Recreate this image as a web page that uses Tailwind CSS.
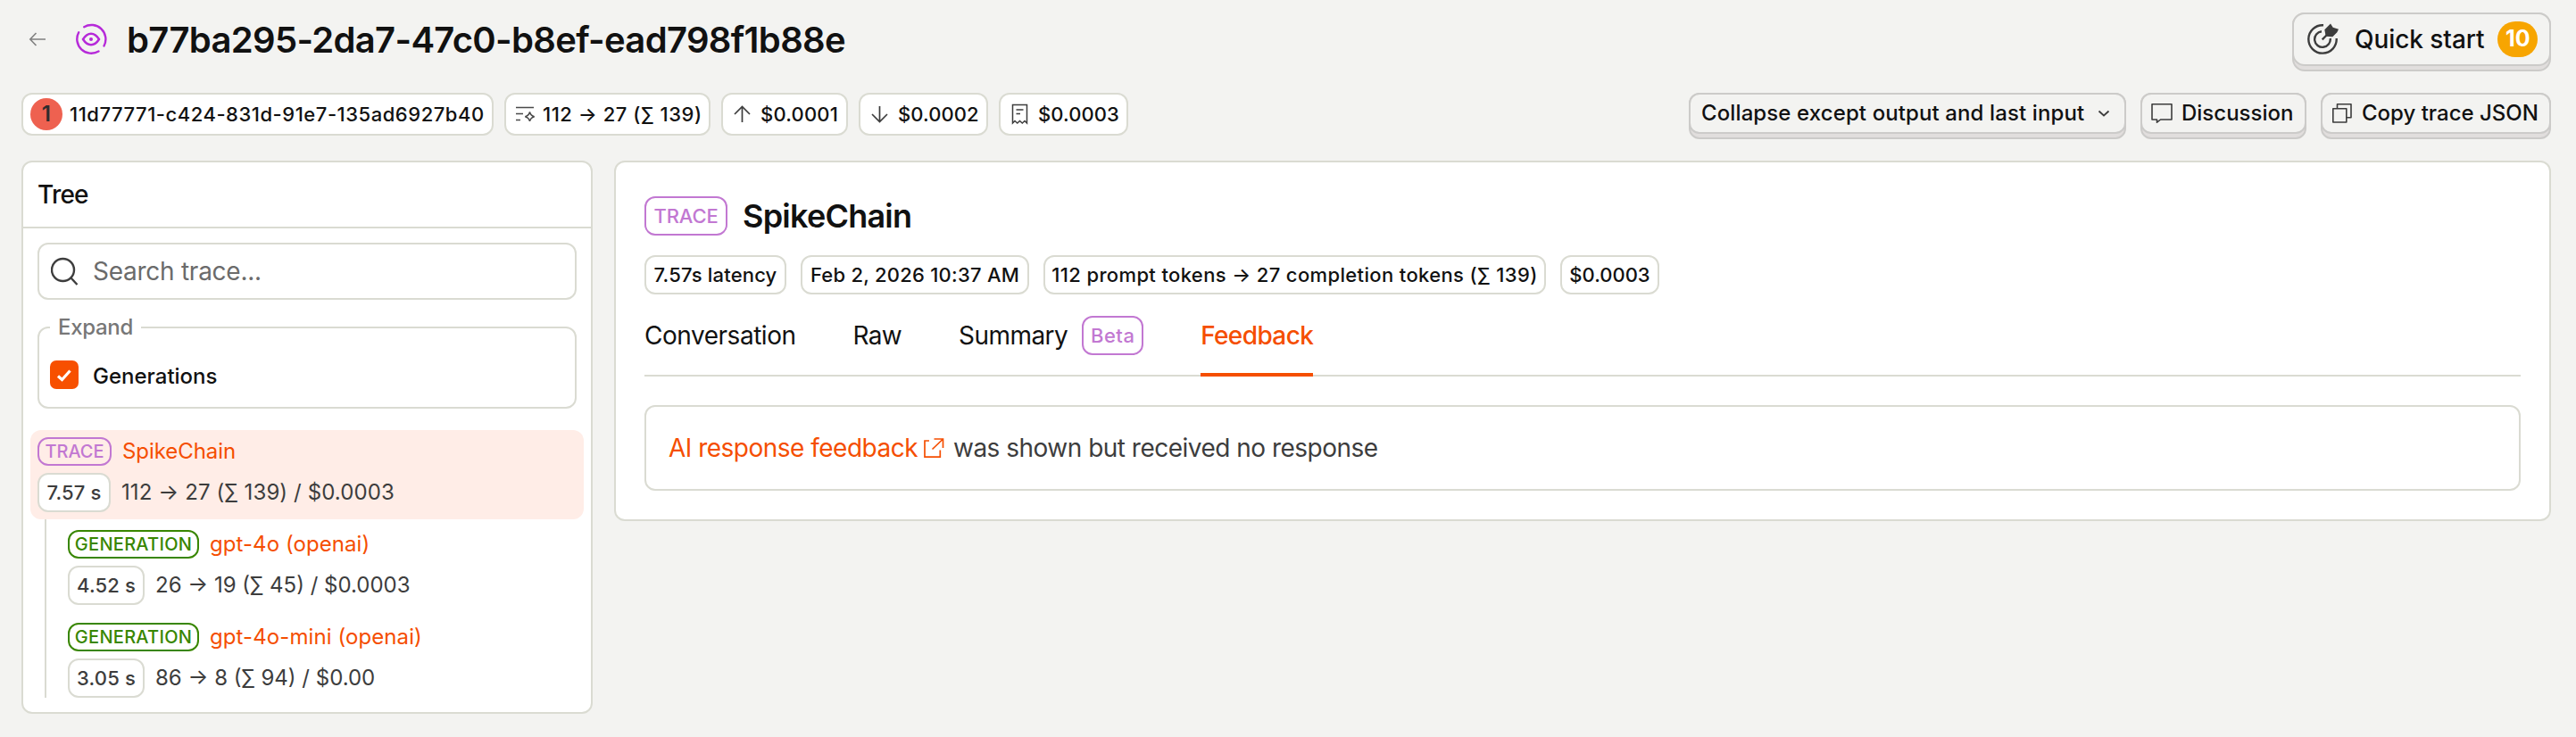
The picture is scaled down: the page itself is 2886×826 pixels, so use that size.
<!DOCTYPE html>
<html lang="en">
<head>
<meta charset="utf-8">
<title>Trace</title>
<script src="https://cdn.jsdelivr.net/npm/@tailwindcss/browser@4"></script>
</head>
<body class="bg-[#f3f3f1] font-['Inter',sans-serif] text-[#111] w-[2886px] h-[826px] overflow-hidden">
<div class="flex flex-col pl-6 pr-7 pt-3.5">
  <header class="flex items-start justify-between h-[90px]">
    <div class="flex items-center h-[60px] pl-2">
      <svg class="w-5 h-5" viewBox="0 0 20 20" fill="none" stroke="#808080" stroke-width="1.6"><path d="M19 10H2M8.5 3 1.8 10l6.700 7"/></svg>
      <svg class="w-9 h-9 ml-8" viewBox="0 0 36 36" fill="none" stroke="#b62ad9" stroke-width="2.400" stroke-linecap="round"><path d="M10.200 4.200A16 16 0 0 1 32.500 25.500M26.500 31.500A16 16 0 0 1 4.200 10.200"/><path d="M9 18c2.500-4 5.500-6.200 9-6.200s6.500 2.200 9 6.200c-2.500 4-5.500 6.200-9 6.200S11.500 22 9 18z"/><circle cx="18" cy="18" r="2" fill="#b62ad9" stroke="none"/></svg>
      <h1 class="ml-[22px] pt-px text-[40px] leading-[60px] font-semibold tracking-[-0.68px] whitespace-nowrap">b77ba295-2da7-47c0-b8ef-ead798f1b88e</h1>
    </div>
    <button class="flex flex-col h-[66px] w-[290px] rounded-[14px] border-2 border-[#cccbc9] bg-[#e1dedd]">
      <span class="-mt-[2px] -mx-0.5 flex h-[60px] items-center rounded-[14px] border-2 border-[#cccbc9] bg-[#f3f3f1] pl-[15px]">
        <svg class="w-9 h-9" viewBox="0 0 36 36" fill="none" stroke="#3d3d3d" stroke-width="2.400"><path d="M18 2.300A15.700 15.700 0 1 0 32.700 17M16 9.300a8.800 8.800 0 1 0 9.700 7.700M16.700 18.300 22 13"/><path d="M19.300 7.300 26 .5l2.700 4.200L35 6.700l-1.700 3.500-5 5.100-7.600-.6z" fill="#3d3d3d" stroke="none"/></svg>
        <span class="ml-[17px] text-[28px] font-medium tracking-[-0.07px] whitespace-nowrap">Quick start</span>
        <span class="ml-[15px] flex h-10 w-[45px] items-center justify-center rounded-[20px] bg-[#f7a501] text-[25px] font-bold text-white">10</span>
      </span>
    </button>
  </header>
  <div class="flex items-start justify-between h-[76px]">
    <div class="flex gap-3 text-[22px] font-medium whitespace-nowrap">
      <span class="flex h-12 w-[529px] items-center rounded-xl border-2 border-[#dadbd2] bg-white pl-2 tracking-[0.53px]"><i class="mr-2 flex h-9 w-9 items-center justify-center rounded-full bg-[#ee6150] text-2xl font-semibold not-italic text-[#2d2d2d]">1</i>11d77771-c424-831d-91e7-135ad6927b40</span>
      <span class="flex h-12 w-[231px] items-center rounded-xl border-2 border-[#dadbd2] bg-white pl-2.5 tracking-[0.53px]"><svg class="mr-[7px] w-6 h-6" viewBox="0 0 24 24" fill="none" stroke="#4a4a4a" stroke-width="1.500"><path d="M1 4.500h20M1 11.500h8M1 18.500h5M16.500 9.500q1 4.200 5.200 5.200-4.200 1-5.200 5.200-1-4.200-5.200-5.200 4.200-1 5.200-5.200z"/></svg>112 → 27 (∑ 139)</span>
      <span class="flex h-12 w-[142px] items-center rounded-xl border-2 border-[#dadbd2] bg-white pl-2.5 tracking-[0.2px]"><svg class="mr-2 w-6 h-6" viewBox="0 0 24 24" fill="none" stroke="#3d3d3d" stroke-width="1.700"><path d="M11.500 21V4M3 12l8.500-8.500L20 12"/></svg>$0.0001</span>
      <span class="flex h-12 w-[145px] items-center rounded-xl border-2 border-[#dadbd2] bg-white pl-2.5 tracking-[0.08px]"><svg class="mr-2 w-6 h-6" viewBox="0 0 24 24" fill="none" stroke="#3d3d3d" stroke-width="1.700"><path d="M11.500 3v17M3 12l8.500 8.500L20 12"/></svg>$0.0002</span>
      <span class="flex h-12 w-[145px] items-center rounded-xl border-2 border-[#dadbd2] bg-white pl-2.5 tracking-[0.08px]"><svg class="mr-2 w-6 h-6" viewBox="0 0 24 24" fill="none" stroke="#3d3d3d" stroke-width="1.500"><path d="M3.500 22V1.500h16V22l-2.500-2.500-2.700 2.500-2.800-2.500L8.800 22 6 19.500zM7.500 7h8M7.500 11.500H12"/></svg>$0.0003</span>
    </div>
    <div class="flex gap-4 text-2xl font-medium whitespace-nowrap">
      <button class="flex flex-col h-[52px] w-[490px] rounded-xl border-2 border-[#cccbc9] bg-[#e1dedd]"><span class="-mt-[2px] -mx-0.5 flex h-[46px] items-center rounded-xl border-2 border-[#cccbc9] bg-[#f3f3f1] pl-3 tracking-[0.11px]">Collapse except output and last input<svg class="ml-[15px] w-3.5 h-3.5" viewBox="0 0 14 14" fill="none" stroke="#3d3d3d" stroke-width="1.800"><path d="m1.500 4.500 5.500 5 5.500-5"/></svg></span></button>
      <button class="flex flex-col h-[52px] w-[186px] rounded-xl border-2 border-[#cccbc9] bg-[#e1dedd]"><span class="-mt-[2px] -mx-0.5 flex h-[46px] items-center rounded-xl border-2 border-[#cccbc9] bg-[#f3f3f1] pl-2.5"><svg class="mr-2.5 w-6 h-6" viewBox="0 0 24 24" fill="none" stroke="#3d3d3d" stroke-width="1.600" stroke-linejoin="round"><path d="M1 1.800h22v17.200H10.500L6.500 22.200V19H1z"/></svg>Discussion</span></button>
      <button class="flex flex-col h-[52px] w-[258px] rounded-xl border-2 border-[#cccbc9] bg-[#e1dedd]"><span class="-mt-[2px] -mx-0.5 flex h-[46px] items-center rounded-xl border-2 border-[#cccbc9] bg-[#f3f3f1] pl-2.5"><svg class="mr-2.5 w-6 h-6" viewBox="0 0 24 24" fill="none" stroke="#3d3d3d" stroke-width="1.600" stroke-linejoin="round"><path d="M1.800 6.800h15V22h-15zM6.500 6.800v-5H22v15h-5.200"/></svg>Copy trace JSON</span></button>
    </div>
  </div>
  <main class="flex items-start gap-6">
    <aside class="h-[620px] w-[640px] rounded-xl border-2 border-[#dadbd2] bg-white">
      <h2 class="flex h-[74px] items-center border-b-2 border-[#dadbd2] pl-4 text-[28px] font-medium tracking-[-0.8px]">Tree</h2>
      <div class="px-4 pt-4">
        <label class="flex h-16 items-center rounded-xl border-2 border-[#dadbd2] pl-[13px] text-[28px] tracking-[-0.26px] text-[#6b6b6b]"><svg class="mr-[15px] w-8 h-8" viewBox="0 0 32 32" fill="none" stroke="#3d3d3d" stroke-width="2.400"><circle cx="13.500" cy="14.500" r="12.500"/><path d="m22.500 23.500 7 7.500"/></svg>Search trace...</label>
        <fieldset class="mt-[15px] h-[107px] rounded-xl border-2 border-[#dadbd2] pl-3">
          <legend class="px-[9px] text-2xl leading-8 font-medium tracking-[-0.3px] text-[#777]">Expand</legend>
          <label class="flex items-center pt-[21px] text-2xl leading-8 font-medium"><svg class="mr-4 w-8 h-8" viewBox="0 0 32 32"><rect width="32" height="32" rx="7" fill="#f75000"/><path d="m9 17.500 4.500 4L22.500 11.500" fill="none" stroke="#fff" stroke-width="3.200"/></svg><span class="relative top-0.5">Generations</span></label>
        </fieldset>
      </div>
      <div class="px-2 pt-6">
        <div class="h-[100px] rounded-xl bg-[#ffede7] pl-2 pt-2">
          <div class="flex h-8 items-center"><span class="flex h-8 w-[83px] items-center justify-center rounded-xl border-2 border-[#c278d2] text-xl font-medium text-[#c278d2]">TRACE</span><a class="ml-3 text-2xl tracking-[-0.06px] text-[#f54e00]">SpikeChain</a></div>
          <div class="mt-2 flex h-11 items-center"><span class="flex h-11 w-[82px] items-center justify-center rounded-xl border-2 border-[#dadbd2] bg-white text-[22px] font-medium tracking-[0.15px] text-[#3d3d3d]">7.57 s</span><span class="ml-3 text-2xl tracking-[0.11px] text-[#3d3d3d]">112 → 27 (∑ 139) / $0.0003</span></div>
        </div>
        <div class="ml-4 h-[200px] border-l-2 border-[#dadbd2] pl-6 pt-3">
          <div class="flex h-8 items-center"><span class="flex h-8 w-[147px] items-center justify-center rounded-xl border-2 border-[#388600] text-xl font-medium tracking-[0.28px] text-[#388600]">GENERATION</span><a class="ml-3 text-2xl tracking-[0.07px] text-[#f54e00]">gpt-4o (openai)</a></div>
          <div class="mt-2 flex h-11 items-center"><span class="flex h-11 w-[86px] items-center justify-center rounded-xl border-2 border-[#dadbd2] bg-white text-[22px] font-medium tracking-[0.15px] text-[#3d3d3d]">4.52 s</span><span class="ml-3 text-2xl text-[#3d3d3d]">26 → 19 (∑ 45) / $0.0003</span></div>
          <div class="mt-5 flex h-8 items-center"><span class="flex h-8 w-[147px] items-center justify-center rounded-xl border-2 border-[#388600] text-xl font-medium tracking-[0.28px] text-[#388600]">GENERATION</span><a class="ml-3 text-2xl tracking-[0.09px] text-[#f54e00]">gpt-4o-mini (openai)</a></div>
          <div class="mt-2 flex h-11 items-center"><span class="flex h-11 w-[86px] items-center justify-center rounded-xl border-2 border-[#dadbd2] bg-white text-[22px] font-medium tracking-[0.15px] text-[#3d3d3d]">3.05 s</span><span class="ml-3 text-2xl text-[#3d3d3d]">86 → 8 (∑ 94) / $0.00</span></div>
        </div>
      </div>
    </aside>
    <section class="h-[404px] flex-1 rounded-xl border-2 border-[#dadbd2] bg-white px-8 pt-[38px]">
      <div class="flex h-11 items-center"><span class="flex h-11 w-[93px] items-center justify-center rounded-xl border-2 border-[#c278d2] text-[22px] font-medium tracking-[-0.14px] text-[#c278d2]">TRACE</span><h3 class="ml-[17px] text-4xl font-semibold tracking-[-0.77px]">SpikeChain</h3></div>
      <div class="mt-[22px] flex gap-4 text-[22px] font-medium whitespace-nowrap">
        <span class="flex h-11 w-[159px] items-center justify-center rounded-xl border-2 border-[#dadbd2] tracking-[0.17px]">7.57s latency</span>
        <span class="flex h-11 w-[256px] items-center justify-center rounded-xl border-2 border-[#dadbd2] tracking-[0.24px]">Feb 2, 2026 10:37 AM</span>
        <span class="flex h-11 w-[563px] items-center justify-center rounded-xl border-2 border-[#dadbd2] tracking-[0.36px]">112 prompt tokens → 27 completion tokens (∑ 139)</span>
        <span class="flex h-11 w-[111px] items-center justify-center rounded-xl border-2 border-[#dadbd2]">$0.0003</span>
      </div>
      <nav class="flex h-[92px] items-stretch gap-16 border-b-2 border-[#dadbd2] text-[28px]">
        <span class="flex items-center pt-0.5 tracking-[-0.47px]">Conversation</span>
        <span class="flex items-center pt-0.5 tracking-[-0.7px]">Raw</span>
        <span class="flex items-center pt-0.5 tracking-[-0.55px]">Summary<span class="ml-4 flex h-11 w-[69px] items-center justify-center rounded-xl border-2 border-[#c278d2] text-[22px] font-medium tracking-[0.5px] text-[#c278d2]">Beta</span></span>
        <span class="-mb-0.5 flex items-center border-b-4 border-[#f54e00] pt-1 font-medium tracking-[-0.62px] text-[#f54e00]">Feedback</span>
      </nav>
      <p class="mt-8 flex h-24 items-center rounded-xl border-2 border-[#dadbd2] pl-[25px] text-[28px] tracking-[-0.51px] text-[#3d3d3d]"><a class="flex items-center text-[#f54e00]">AI response feedback<svg class="ml-1.5 mr-2.5 w-6 h-6" viewBox="0 0 24 24" fill="none" stroke="#f54e00" stroke-width="1.700"><path d="M7 4H2v18.200h17.300V14.500M12.500 2h10v10M22.500 2l-12 11.500"/></svg></a><span>was shown but received no response</span></p>
    </section>
  </main>
</div>
</body>
</html>
